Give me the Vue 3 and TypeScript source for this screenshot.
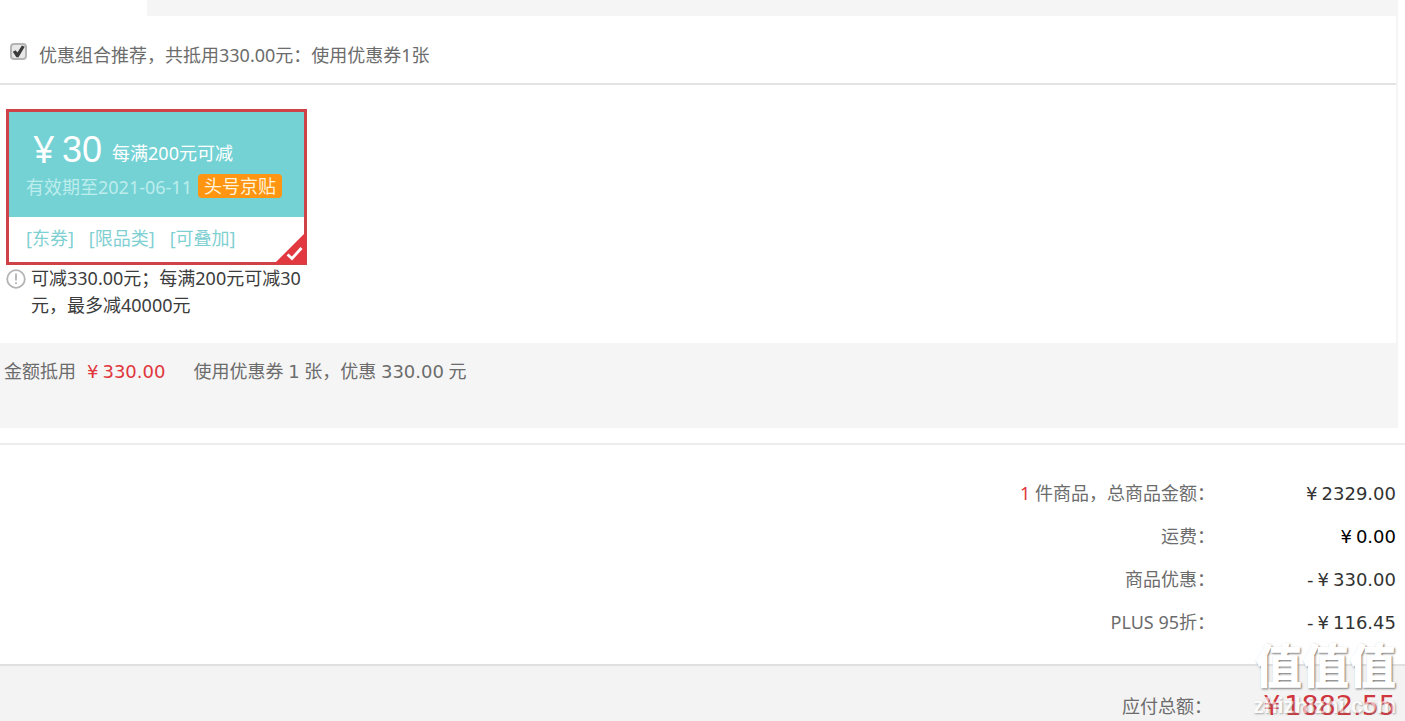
<script setup lang="ts">
import { ref } from 'vue'

interface SummaryRow {
  count?: string
  label: string
  sign?: string
  amount: string
  strong?: boolean
}

const recommended = ref(true)
const tags: string[] = ['东券', '限品类', '可叠加']
const rows: SummaryRow[] = [
  { count: '1', label: '件商品，总商品金额：', amount: '2329.00' },
  { label: '运费：', amount: '0.00', strong: true },
  { label: '商品优惠：', sign: '-', amount: '330.00' },
  { label: 'PLUS 95折：', sign: '-', amount: '116.45' },
]
</script>

<template>
  <main class="checkout">
    <div class="tabs"><div class="tab-active"></div></div>

    <section class="panel">
      <div class="recommend">
        <input id="recommend" v-model="recommended" class="tick" type="checkbox" />
        <label for="recommend">优惠组合推荐，共抵用330.00元：使用优惠券1张</label>
      </div>

      <div class="coupons">
        <article class="coupon">
          <div class="coupon-top">
            <div class="coupon-value">
              <span class="yen">¥</span><span class="face">30</span>
              <span class="rule">每满200元可减</span>
            </div>
            <div class="coupon-date">
              <span>有效期至2021-06-11</span><span class="badge">头号京贴</span>
            </div>
          </div>
          <div class="coupon-tags">
            <span v-for="tag in tags" :key="tag">[{{ tag }}]</span>
          </div>
          <svg class="corner" viewBox="0 0 32 32" aria-hidden="true">
            <path d="M32 0V32H0Z" fill="#e2383f" />
            <path d="M13.500 22.500l4.500 4L27.500 16" fill="none" stroke="#fff" stroke-width="2.800" />
          </svg>
        </article>
        <div class="note">
          <svg class="note-icon" viewBox="0 0 20 20" aria-hidden="true">
            <circle cx="10" cy="10" r="8.800" fill="none" stroke="#b4b4b4" stroke-width="1.800" />
            <path d="M10 4.500V11.500M10 13.300V15" stroke="#aaa" stroke-width="1.600" />
          </svg>
          <p>可减330.00元；每满200元可减30元，最多减40000元</p>
        </div>
      </div>
    </section>

    <section class="offset">
      <span>金额抵用</span>
      <span class="num red"><span class="cur">¥</span>330.00</span>
      <span class="usage">使用优惠券 <span class="num">1</span> 张，优惠 <span class="num">330.00</span> 元</span>
    </section>

    <section class="summary">
      <div v-for="row in rows" :key="row.label" class="row">
        <span class="row-label"><span v-if="row.count" class="red">{{ row.count }}&nbsp;</span>{{ row.label }}</span>
        <span class="row-amount num" :class="{ strong: row.strong }"><span v-if="row.sign" class="sign">{{ row.sign }}</span><span class="cur">¥</span>{{ row.amount }}</span>
      </div>
    </section>

    <footer class="payable">
      <span class="row-label">应付总额：</span>
      <span class="total num"><span class="cur">¥</span>1882.55</span>
      <div class="watermark">
        <div class="mark">值值值</div>
        <div class="site">zhizhizhi.com</div>
      </div>
    </footer>
  </main>
</template>

<style>
body {
  margin: 0;
  background: #fff;
}
</style>

<style scoped>
.checkout {
  font-family: "Noto Sans", "Noto Sans CJK SC", sans-serif;
  font-size: 18px;
  font-weight: 400;
  line-height: 27px;
  color: #6c6c6c;
  overflow: hidden;
}
.num {
  font-family: "DejaVu Sans", "Noto Sans CJK SC", sans-serif;
}
.cur {
  margin-right: 4px;
}
.red {
  color: #e0353c;
}
.tabs {
  height: 16px;
  margin-right: 7px;
  background: #f5f5f5;
}
.tab-active {
  width: 147px;
  height: 16px;
  background: #fff;
}
.panel {
  margin-right: 7px;
  border-right: 2px solid #f5f5f5;
}
.recommend {
  display: flex;
  align-items: center;
  height: 67px;
  border-bottom: 2px solid #e3e3e3;
}
.recommend label {
  margin: 11px 0 0 12px;
}
.tick {
  appearance: none;
  display: grid;
  place-items: center;
  box-sizing: border-box;
  width: 17px;
  height: 17px;
  margin: 4px 0 0 10px;
  border: 2px solid #b5b5b5;
  border-radius: 4px;
  background: #e8e8e8;
}
.tick:checked::before {
  content: "";
  width: 13px;
  height: 13px;
  background: #3c3c3c;
  clip-path: polygon(6% 52%, 28% 40%, 42% 58%, 76% 4%, 98% 14%, 50% 94%, 34% 94%);
}
.coupons {
  width: 301px;
  padding: 24px 0 24px 6px;
}
.coupon {
  position: relative;
  border: 3px solid #cf4247;
}
.coupon-top {
  height: 105px;
  box-sizing: border-box;
  padding: 14px 0 0 17px;
  background: #74d2d4;
  color: #fff;
}
.coupon-value {
  display: flex;
  align-items: center;
  height: 48px;
  line-height: 46px;
}
.yen {
  width: 36px;
  box-sizing: border-box;
  padding: 0 0 4px 7px;
  font-family: "Noto Sans", sans-serif;
  font-size: 38px;
}
.face {
  font-family: "Liberation Sans", sans-serif;
  font-size: 36px;
}
.rule {
  margin: 6px 0 0 10px;
}
.coupon-date {
  display: flex;
  align-items: center;
  color: #bdeded;
}
.badge {
  margin: 0 0 3px 6px;
  padding: 0 6px;
  border-radius: 4px;
  background: #ff9510;
  color: #fff3dc;
  line-height: 24px;
}
.coupon-tags {
  display: flex;
  gap: 15px;
  padding: 8px 0 10px 17px;
  color: #7fd0d2;
}
.corner {
  position: absolute;
  right: -2px;
  bottom: -2px;
  width: 32px;
  height: 32px;
}
.note {
  display: flex;
  color: #3c3c3c;
}
.note-icon {
  flex: none;
  width: 20px;
  height: 20px;
  margin: 4px 5px 0 0;
}
.note p {
  margin: 0;
}
.offset {
  display: flex;
  height: 70px;
  margin-right: 7px;
  padding: 15px 0 0 4px;
  gap: 11px;
  background: #f5f5f5;
}
.usage {
  margin-left: 17px;
}
.summary {
  margin-top: 15px;
  padding: 27px 9px 20px 0;
  border-top: 2px solid #ededed;
}
.row {
  display: flex;
  justify-content: flex-end;
  line-height: 43px;
}
.row-label {
  white-space: nowrap;
}
.row-amount {
  width: 181px;
  text-align: right;
  color: #333;
}
.row-amount.strong {
  color: #000;
}
.sign {
  margin-right: 4px;
}
.payable {
  position: relative;
  display: flex;
  justify-content: flex-end;
  padding: 25px 9px 0 0;
  border-top: 2px solid #e0e0e0;
  background: #f3f3f3;
  line-height: 30px;
}
.total {
  width: 184px;
  text-align: right;
  font-size: 27px;
  color: #d0363d;
}
.watermark {
  position: absolute;
  right: 9px;
  bottom: 0;
  color: #fff;
  text-align: right;
  text-shadow: 1px 1px 2px #777;
}
.mark {
  font-size: 47px;
  font-weight: 900;
  line-height: 52px;
}
.site {
  font-family: "Liberation Sans", sans-serif;
  font-size: 22px;
  font-weight: 700;
  line-height: 30px;
  opacity: 0.6;
}
</style>
